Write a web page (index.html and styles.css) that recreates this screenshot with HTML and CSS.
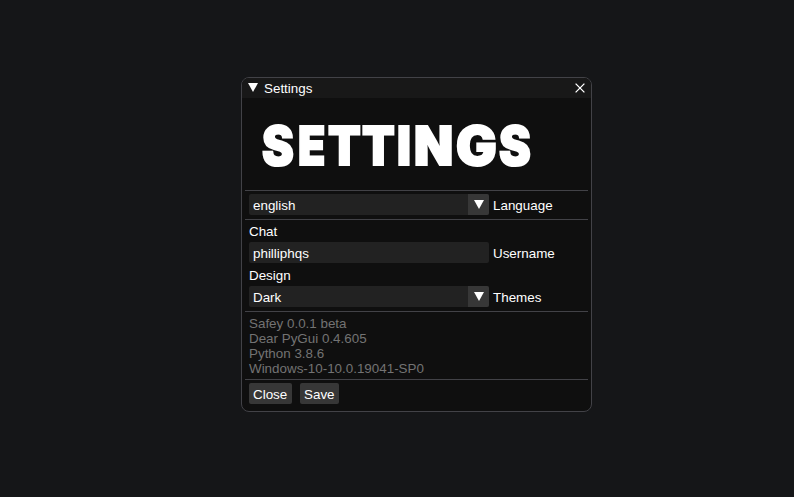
FILE: index.html
```html
<!DOCTYPE html>
<html lang="en">
<head>
<meta charset="utf-8">
<title>Settings</title>
<link rel="stylesheet" href="styles.css">
</head>
<body>
<main class="window">
  <header class="titlebar">
    <svg class="collapse" width="10" height="9" viewBox="0 0 10 9"><path d="M0 0H10L5 9Z" fill="#fff"/></svg>
    <span class="title">Settings</span>
    <svg class="close" width="10" height="10" viewBox="0 0 10 10"><path d="M.6.6 9.4 9.4M9.4.6.6 9.4" stroke="#fff" stroke-width="1.3"/></svg>
  </header>
  <h1 class="banner"><span>S</span><span class="e">E</span><span>T</span><span>T</span><span>I</span><span class="n">N</span><span class="g">G</span><span>S</span></h1>
  <section class="group language">
    <div class="row"><div class="combo"><span>english</span><i class="arrow"><svg width="10" height="9" viewBox="0 0 10 9"><path d="M0 0H10L5 9Z" fill="#fff"/></svg></i></div><label>Language</label></div>
  </section>
  <section class="group options">
    <p class="caption">Chat</p>
    <div class="row"><div class="combo"><span>philliphqs</span></div><label>Username</label></div>
    <p class="caption">Design</p>
    <div class="row"><div class="combo"><span>Dark</span><i class="arrow"><svg width="10" height="9" viewBox="0 0 10 9"><path d="M0 0H10L5 9Z" fill="#fff"/></svg></i></div><label>Themes</label></div>
  </section>
  <section class="group info">
    <p>Safey 0.0.1 beta</p>
    <p>Dear PyGui 0.4.605</p>
    <p>Python 3.8.6</p>
    <p>Windows-10-10.0.19041-SP0</p>
  </section>
  <footer class="group actions"><button class="btn-close">Close</button><button class="btn-save">Save</button></footer>
</main>
</body>
</html>
```
FILE: styles.css
```css
* { box-sizing: border-box; }
body {
  margin: 0;
  height: 497px;
  overflow: hidden;
  background: #151618;
  color: #fff;
  font: 13.4px/15px "Liberation Sans", Arial, sans-serif;
}
p { margin: 0; }
svg { display: block; }
.window {
  width: 351px;
  height: 335px;
  margin: 77px 0 0 241px;
  border: 1px solid #424247;
  border-radius: 8px;
  background: #0f0f0f;
  overflow: hidden;
}
.titlebar {
  display: flex;
  align-items: center;
  height: 20px;
  padding: 0 6px;
  background: #181818;
}
.collapse, .close { margin-top: -1px; }
.title { margin: 1px auto 0 6px; }
.banner {
  display: grid;
  grid-template-columns: 35.7px 30.1px 34px 34.7px 17px 42.4px 42.8px 36px;
  height: 92px;
  margin: 0 0 0 20.2px;
  padding-top: 3px;
  font: 900 53px/90px Inter, sans-serif;
  -webkit-text-stroke: 2px #fff;
}
.banner span { transform: scaleX(.9); transform-origin: left; justify-self: start; }
.banner .e { transform: scaleX(.84); }
.banner .n { transform: scaleX(.96); }
.banner .g { transform: scaleX(1.02); }
.group {
  margin: 0 3px;
  padding: 3px 4px 0;
  border-top: 1px solid #424247;
}
.language { height: 29px; }
.options { height: 92px; padding-top: 4px; }
.info { height: 68px; padding-top: 4px; color: #737373; }
.row { display: flex; align-items: center; height: 21px; }
.combo {
  display: flex;
  align-items: center;
  justify-content: space-between;
  width: 240px;
  height: 21px;
  margin-right: 4px;
  padding-left: 4px;
  border-radius: 2px;
  background: #222;
  overflow: hidden;
}
.combo span, .row label { padding-top: 1px; }
.arrow {
  display: flex;
  align-items: center;
  justify-content: center;
  width: 21px;
  height: 21px;
  background: #373737;
}
.caption { height: 18px; }
.row + .caption { height: 23px; padding-top: 5px; }
.actions { display: flex; gap: 8px; }
button {
  height: 21px;
  padding: 1px 0 0 4px;
  border: 0;
  border-radius: 2px;
  background: #373737;
  color: #fff;
  font: inherit;
  text-align: left;
}
.btn-close { width: 43px; }
.btn-save { width: 39px; }
```
